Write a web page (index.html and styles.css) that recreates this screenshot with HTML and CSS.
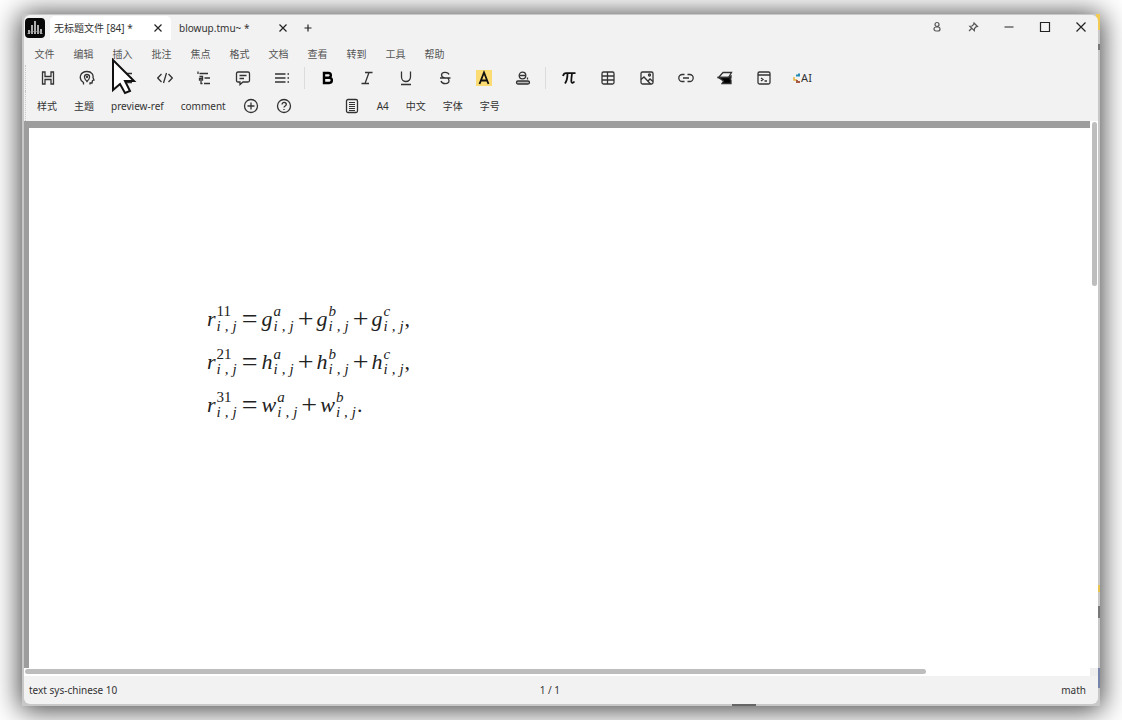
FILE: index.html
```html
<!DOCTYPE html>
<html lang="zh-CN">
<head>
<meta charset="utf-8">
<title>无标题文件 [84] *</title>
<link rel="stylesheet" href="styles.css">
</head>
<body>
<div class="frame">
<div class="window">
  <header class="titlebar">
    <svg class="logo" viewBox="0 0 20 20" aria-hidden="true"><rect width="20" height="20" rx="4" fill="#080808"/><path d="M4 12v4M7 7v9M10 3v13M13 7v9M16 11v5" stroke="#e4e4e4" stroke-width="1.5"/><path d="M2.500 16q1.500-3 3-2t3-.5 3 0 3 .5 3 2" stroke="#999" stroke-width=".8" fill="none"/></svg>
    <div class="tab active"><button class="tab-name">无标题文件 [84] *</button><button class="tab-close" aria-label="关闭"><svg viewBox="0 0 8 8"><path d="M.5.5l7 7M7.500.5l-7 7"/></svg></button></div>
    <div class="tab"><button class="tab-name">blowup.tmu~ *</button><button class="tab-close" aria-label="关闭"><svg viewBox="0 0 8 8"><path d="M.5.5l7 7M7.500.5l-7 7"/></svg></button></div>
    <button class="new-tab" aria-label="新标签"><svg viewBox="0 0 8 8"><path d="M4 .5v7M.5 4h7"/></svg></button>
    <div class="window-buttons">
      <button aria-label="账户"><svg class="soft" viewBox="0 0 16 16"><circle cx="8" cy="5.500" r="2"/><rect x="5" y="8" width="6" height="4" rx="2"/></svg></button>
      <button aria-label="置顶"><svg class="soft" viewBox="0 0 16 16"><path d="M9 4l3.500 3.500-1.500.3-1.500 1.700-.2 2.200L4.800 7.200l2.200-.2 1.700-1.500zM6.500 9.500L4 12"/></svg></button>
      <button aria-label="最小化"><svg viewBox="0 0 16 16"><path d="M3.500 8h9"/></svg></button>
      <button aria-label="最大化"><svg viewBox="0 0 16 16"><path d="M3.500 3.500h9v9h-9z"/></svg></button>
      <button aria-label="关闭窗口"><svg viewBox="0 0 16 16"><path d="M3.500 3.500l9 9M12.500 3.500l-9 9"/></svg></button>
    </div>
  </header>
  <nav class="menubar">
    <button>文件</button><button>编辑</button><button>插入</button><button>批注</button><button>焦点</button><button>格式</button><button>文档</button><button>查看</button><button>转到</button><button>工具</button><button>帮助</button>
  </nav>
  <div class="toolbar" role="toolbar">
    <button aria-label="标题"><svg viewBox="0 0 16 16"><path d="M2.500 2h2.500v4.500h6V2h2.500v12H11V9.500H5V14H2.500z"/></svg></button>
    <button aria-label="定理"><svg viewBox="0 0 16 16"><path d="M4.500 14.500v-2C-1 9 1 1.500 8 1.500c5 0 6.500 3.500 6 6l1 2.500-1.500.5-.5 2.500h-2v1.500M8 11.500C4.200 8 5 4.500 8 4.500s3.800 3.500 0 7z"/><circle cx="8" cy="7" r=".5"/></svg></button>
    <button aria-label="列表"><svg viewBox="0 0 16 16"><path d="M6 3.500h8M6 8h8M6 12.500h8M2 3.500h1M2 8h1M2 12.500h1"/></svg></button>
    <button aria-label="代码"><svg viewBox="0 0 16 16"><path d="M4.500 4L.7 8l3.800 4M11.500 4l3.800 4-3.800 4M9.500 3l-3 10"/></svg></button>
    <button aria-label="大纲"><svg viewBox="0 0 16 16"><path d="M2 1.500v2.500M3.500 3.500h8.500M8.500 8h5.500M8 13.500h6M5 11v2.500h1.500M3.500 6.500h3V10h-3V8.300h3"/></svg></button>
    <button aria-label="注释"><svg viewBox="0 0 16 16"><path d="M3 2h10q1.500 0 1.500 1.500v7Q14.500 12 13 12H8l-3 2.500V12H3q-1.500 0-1.500-1.500v-7Q1.500 2 3 2zM4.500 5.500h7M4.500 8.500h4.500"/></svg></button>
    <button aria-label="段落"><svg viewBox="0 0 16 16"><path d="M1 4h10.500M1 8h10.500M1 12h10.500M13.500 4h1.500M13.500 8h1.500M13.500 12h1.500"/></svg></button>
    <span class="divider"></span>
    <button aria-label="粗体"><svg viewBox="0 0 16 16"><path class="heavy" d="M4 3h4.500a2.300 2.300 0 010 4.700H4zM4 7.700h5.200a2.600 2.600 0 010 5.300H4z"/></svg></button>
    <button aria-label="斜体"><svg viewBox="0 0 16 16"><path d="M6 2.500h7.500M2.500 13.500H10M10 2.500l-4 11"/></svg></button>
    <button aria-label="下划线"><svg viewBox="0 0 16 16"><path d="M3.500 1.500V7a4.500 4.500 0 009 0V1.500M3 14.500h10"/></svg></button>
    <button aria-label="删除线"><svg viewBox="0 0 16 16"><path d="M12 4.500C11 1.500 4.500 1.500 4.500 5c0 1.500 1 2.500 3.500 3M3 8h10.500M4 11c1 3.500 8 3.500 8-.2C12 9.500 11.500 8.500 10 8"/></svg></button>
    <button aria-label="高亮"><svg viewBox="0 0 16 16"><path class="highlight" d="M0 0h16v16H0z"/><path class="strong" d="M3.500 14L8 2.500 12.500 14M5 10.500h6"/></svg></button>
    <button aria-label="颜色"><svg viewBox="0 0 16 16"><circle cx="7.500" cy="5.500" r="3.300"/><path d="M4.500 5.500h6M12.500 7.500v2"/><rect x="1.500" y="11" width="13" height="3" rx="1.500" fill="#bbb"/></svg></button>
    <span class="divider"></span>
    <button aria-label="公式"><svg viewBox="0 0 16 16"><path class="strong" d="M2 6q.8-2.800 3-2.800H14.500M6.500 3.500Q6.500 10 4 13.500M11 3.500Q10 11 10.500 12q1 1.800 3-.5"/></svg></button>
    <button aria-label="表格"><svg viewBox="0 0 16 16"><rect x="2" y="2" width="12" height="12" rx="1.500"/><path d="M2 6h12M2 10h12M7.500 2v12"/></svg></button>
    <button aria-label="图片"><svg viewBox="0 0 16 16"><rect x="2" y="2" width="12" height="12" rx="1.500"/><circle cx="10.500" cy="5" r="1"/><path d="M2 9.500L5 7l6.500 7M9 11l2-2 3 2.500"/></svg></button>
    <button aria-label="链接"><svg viewBox="0 0 16 16"><path d="M6.500 4.500H4.300a3.500 3.500 0 000 7h2.200M9.500 4.500h2.200a3.500 3.500 0 010 7H9.500M5 8h6"/></svg></button>
    <button aria-label="几何"><svg viewBox="0 0 16 16"><path d="M6 2.500h8.500L11.500 7.500H1.500z"/><path class="fill" d="M1.500 7.500h10l2.500-1.500v2l-1 1 1 1v3.500H5L6.500 11z"/></svg></button>
    <button aria-label="终端"><svg viewBox="0 0 16 16"><rect x="2" y="2" width="12" height="12" rx="1.500"/><path d="M2 5h12M5 8l2 1.500L5 11M8.500 11h2.500"/></svg></button>
    <button class="ai" aria-label="AI"><svg viewBox="0 0 8 16"><path d="M6 3.500v3M3 5.500h3" stroke="#258bb5" stroke-width="2"/><path d="M1 7v3h3" stroke="#e4b33b" stroke-width="1.500"/><path d="M4 10v2h3" stroke="#a85c46" stroke-width="2"/></svg>AI</button>
  </div>
  <div class="toolbar modes" role="toolbar">
    <button>样式</button><button>主题</button><button>preview-ref</button><button>comment</button>
    <button aria-label="添加"><svg viewBox="0 0 16 16"><circle cx="8" cy="8" r="6.500"/><path d="M8 4.500v7M4.500 8h7"/></svg></button>
    <button aria-label="帮助"><svg viewBox="0 0 16 16"><circle cx="8" cy="8" r="6.500"/><path d="M6 6.500c0-3 4.300-2.500 4.300 0C10.300 8 8 8 8 9.500M8 11v1"/></svg></button>
    <span class="group-gap"></span>
    <button aria-label="页面"><svg viewBox="0 0 16 16"><rect x="2.500" y="1.500" width="11" height="13" rx="1.500"/><path d="M5 4.500h6M5 6.500h6M5 8.500h6M5 10.500h6M5 12.500h6" stroke-width="1"/></svg></button>
    <button>A4</button><button>中文</button><button>字体</button><button>字号</button>
  </div>
  <main class="canvas">
    <section class="page">
      <div class="equation"><i>r</i><span class="scripts"><span>11</span><i>i<b>,</b>j</i></span><span class="op equals">=</span><i>g</i><span class="scripts"><i>a</i><i>i<b>,</b>j</i></span><span class="op">+</span><i>g</i><span class="scripts"><i>b</i><i>i<b>,</b>j</i></span><span class="op">+</span><i>g</i><span class="scripts"><i>c</i><i>i<b>,</b>j</i></span><span>,</span></div>
      <div class="equation"><i>r</i><span class="scripts"><span>21</span><i>i<b>,</b>j</i></span><span class="op equals">=</span><i>h</i><span class="scripts"><i>a</i><i>i<b>,</b>j</i></span><span class="op">+</span><i>h</i><span class="scripts"><i>b</i><i>i<b>,</b>j</i></span><span class="op">+</span><i>h</i><span class="scripts"><i>c</i><i>i<b>,</b>j</i></span><span>,</span></div>
      <div class="equation"><i>r</i><span class="scripts"><span>31</span><i>i<b>,</b>j</i></span><span class="op equals">=</span><i>w</i><span class="scripts"><i>a</i><i>i<b>,</b>j</i></span><span class="op">+</span><i>w</i><span class="scripts"><i>b</i><i>i<b>,</b>j</i></span><span>.</span></div>
    </section>
    <div class="scroll-y"><span></span></div>
    <div class="scroll-x"><span></span></div>
    <div class="scroll-corner"></div>
  </main>
  <footer class="status"><span>text sys-chinese 10</span><span>1 / 1</span><span>math</span></footer>
</div>
</div>
<svg class="cursor" viewBox="0 0 26 38" aria-hidden="true"><path d="M2 2v30l7-6 5 9 5-2-5-10h9z" fill="#fff" stroke="#111" stroke-width="2"/></svg>
</body>
</html>
```
FILE: styles.css
```css
* { box-sizing: border-box; }
body {
  margin: 0;
  height: 100vh;
  padding: 14px 22px;
  display: flex;
  overflow: hidden;
  background: #fff;
  font: 10px/16px "Noto Sans", "Noto Sans CJK SC", sans-serif;
  color: #333;
}
button { padding: 0; border: 0; background: none; font: inherit; color: inherit; }
svg { display: block; fill: none; stroke: currentColor; }
.frame {
  flex: 1;
  display: flex;
  padding: 1px 2px 2px;
  background:
    linear-gradient(#f2cb55, #f2cb55) right 0 top 0 / 4px 16px no-repeat,
    linear-gradient(#777, #777) right 0 top 30px / 2px 6px no-repeat,
    linear-gradient(#e8c34d, #e8c34d) right 0 bottom 114px / 2px 7px no-repeat,
    linear-gradient(#777, #777) right 0 bottom 88px / 2px 12px no-repeat,
    linear-gradient(#7584a8, #7584a8) right 0 bottom 18px / 2px 20px no-repeat,
    linear-gradient(#666, #666) left 710px bottom 0 / 24px 2px no-repeat,
    #c8c8c8;
  box-shadow: 0 2px 26px 2px rgba(0, 0, 0, .75);
}
.window {
  flex: 1;
  min-width: 0;
  display: flex;
  flex-direction: column;
  background: #f2f2f2;
  border-radius: 6px;
  overflow: hidden;
}
.titlebar { display: flex; align-items: center; height: 26px; }
.logo { width: 20px; height: 20px; margin: 0 5px 0 1px; stroke: none; }
.tab {
  display: flex;
  align-items: center;
  justify-content: space-between;
  width: 121px;
  height: 24px;
  padding: 0 8px 0 4px;
  border-radius: 5px 5px 0 0;
  margin-right: 4px;
}
.tab.active { background: #fff; }
.tab-close, .new-tab { display: grid; place-items: center; width: 10px; height: 16px; color: #222; }
.tab-close svg, .new-tab svg { width: 8px; height: 8px; stroke-width: 1.2; }
.new-tab { margin-left: 3px; }
.window-buttons { display: flex; margin-left: auto; }
.window-buttons button { display: grid; place-items: center; width: 36px; height: 26px; padding: 0 0 2px 2px; color: #222; }
.window-buttons svg { width: 16px; height: 16px; stroke-width: 1.2; }
.window-buttons .soft { color: #555; }
.menubar { display: flex; align-items: center; height: 24px; padding: 1px 0 0 1px; color: #555; }
.menubar button { width: 39px; }
.toolbar {
  display: flex;
  align-items: center;
  height: 26px;
  margin-left: 1px;
  padding-left: 2px;
  border-left: 1px dotted #c8c8c8;
}
.toolbar button { display: flex; align-items: center; justify-content: center; width: 39px; height: 24px; }
.toolbar svg { width: 16px; height: 16px; stroke-width: 1.3; }
.divider { width: 1px; height: 22px; margin: 0 3px; background: #dcdcdc; }
.toolbar .heavy { stroke: #000; stroke-width: 2.4; }
.toolbar .strong { stroke: #111; stroke-width: 1.8; }
.toolbar .highlight { fill: #fbdc72; stroke: none; }
.toolbar .fill { fill: #000; }
.toolbar .ai svg { width: 8px; }
.toolbar .ai { font-size: 11px; }
.modes { height: 30px; padding: 0 0 0 11px; gap: 17px; }
.modes button { width: auto; }
.group-gap { width: 18px; }
.canvas {
  flex: 1;
  min-height: 0;
  display: grid;
  grid-template: minmax(0, 1fr) 8px / minmax(0, 1fr) 8px;
  background: #fff;
}
.page {
  border-top: 7px solid #9d9d9d;
  border-left: 5px solid #9d9d9d;
  padding: 169px 0 0 178px;
  background: #fff;
  overflow: hidden;
}
.scroll-y span { display: block; width: 5px; height: 164px; margin: 1px 0 0 2px; border-radius: 3px; background: #bdbdbd; }
.scroll-x span { display: block; width: 84.500%; height: 5px; margin: 1px 0 0 1px; border-radius: 3px; background: #bdbdbd; }
.scroll-corner { background: #eee; }
.equation {
  display: flex;
  align-items: center;
  height: 43px;
  font: 22px/28px "Liberation Serif", serif;
  color: #222;
  white-space: nowrap;
}
.scripts { display: flex; flex-direction: column; width: 22px; padding-left: 1px; font-size: 15px; line-height: 15px; }
.scripts i { display: flex; gap: 4px; }
.scripts b { font-weight: normal; }
.op { width: 22px; text-align: center; font-size: 28px; }
.equals { width: 24px; }
.status {
  display: grid;
  grid-template-columns: 1fr auto 1.03fr;
  align-items: center;
  height: 28px;
  padding: 0 12px 0 5px;
}
.status span:last-child { text-align: right; }
.cursor { position: absolute; left: 111px; top: 58px; width: 26px; height: 38px; }
```
